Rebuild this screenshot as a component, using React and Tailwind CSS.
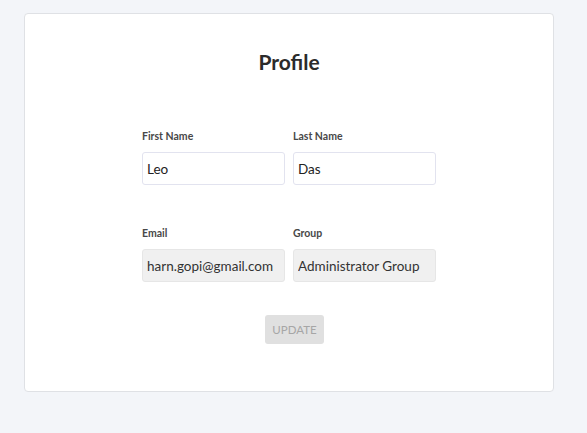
export default function App() {
  return (
    <div className="min-h-[433px] bg-[#f3f5f9] pt-[13px] pl-6 pr-[33px] pb-[41px] font-['Lato',sans-serif]">
      <div className="bg-white border border-[#dfe1e5] rounded h-[379px] flex flex-col items-center">
        <h1 className="mt-[36px] text-[21px] font-bold text-[#2b2b2b] leading-6">Profile</h1>
        <div className="mt-[54px] grid grid-cols-2 gap-x-2 w-[294px]">
          <Field label="First Name" value="Leo" />
          <Field label="Last Name" value="Das" />
        </div>
        <div className="mt-[40px] grid grid-cols-2 gap-x-2 w-[294px]">
          <Field label="Email" value="harn.gopi@gmail.com" disabled />
          <Field label="Group" value="Administrator Group" disabled />
        </div>
        <button
          disabled
          className="mt-[33px] ml-[11px] h-[29px] w-[59px] rounded-[3px] bg-[#e0e0e0] text-[#a6a6a6] text-[11.5px]"
        >
          UPDATE
        </button>
      </div>
    </div>
  );
}

function Field({ label, value, disabled }) {
  return (
    <div>
      <label className="block text-[10.5px] font-bold text-[#484848] leading-4 mb-[8px]">{label}</label>
      <input
        defaultValue={value}
        disabled={disabled}
        className={`w-full h-[33px] px-[4px] rounded-[3px] border text-[13.5px] text-[#222] outline-none ${
          disabled ? "bg-[#f0f0f0] border-[#e6e6e6] text-[#333]" : "bg-white border-[#e2e3ef]"
        }`}
      />
    </div>
  );
}
